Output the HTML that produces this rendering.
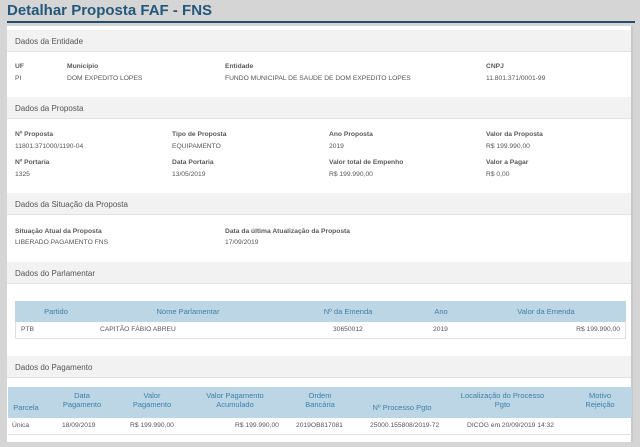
<!DOCTYPE html>
<html><head><meta charset="utf-8"><style>
*{margin:0;padding:0;box-sizing:border-box}
body{width:640px;height:447px;background:#d5d5d5;font-family:"Liberation Sans",sans-serif;position:relative;overflow:hidden;color:#555}
.a{position:absolute;white-space:nowrap}
.t{left:7px;top:2px;font-size:15px;font-weight:bold;color:#24587a}
.ul{left:7px;top:21px;width:628px;height:2px;background:#24506c}
.panel{left:7px;top:26px;width:626px;height:416px;background:#fff;border-right:2px solid #c8c8c8}
.band{left:7px;width:624px;height:22px;background:#f2f2f2;border-bottom:1px solid #e2e2e2;font-size:8px;color:#555;padding:7px 0 0 8px}
.l{font-size:6.7px;font-weight:bold;color:#5a5a5a}
.v{font-size:6.7px;color:#555}
.th{background:#bcd6e5;color:#3d7fa8;font-size:7.5px;text-align:center;line-height:9px}
.c{font-size:6.7px;color:#555}
</style></head><body>
<div class="a t">Detalhar Proposta FAF - FNS</div>
<div class="a ul"></div>
<div class="a panel"></div>

<div class="a band" style="top:30px">Dados da Entidade</div>
<div class="a l" style="left:15px;top:63px">UF</div><div class="a v" style="left:15px;top:75px">PI</div>
<div class="a l" style="left:67px;top:63px">Município</div><div class="a v" style="left:67px;top:75px">DOM EXPEDITO LOPES</div>
<div class="a l" style="left:225px;top:63px">Entidade</div><div class="a v" style="left:225px;top:75px">FUNDO MUNICIPAL DE SAUDE DE DOM EXPEDITO LOPES</div>
<div class="a l" style="left:486px;top:63px">CNPJ</div><div class="a v" style="left:486px;top:75px">11.801.371/0001-99</div>

<div class="a band" style="top:97px">Dados da Proposta</div>
<div class="a l" style="left:15px;top:131px">Nº Proposta</div><div class="a v" style="left:15px;top:143px">11801.371000/1190-04</div>
<div class="a l" style="left:172px;top:131px">Tipo de Proposta</div><div class="a v" style="left:172px;top:143px">EQUIPAMENTO</div>
<div class="a l" style="left:329px;top:131px">Ano Proposta</div><div class="a v" style="left:329px;top:143px">2019</div>
<div class="a l" style="left:486px;top:131px">Valor da Proposta</div><div class="a v" style="left:486px;top:143px">R$ 199.990,00</div>
<div class="a l" style="left:15px;top:159px">Nº Portaria</div><div class="a v" style="left:15px;top:171px">1325</div>
<div class="a l" style="left:172px;top:159px">Data Portaria</div><div class="a v" style="left:172px;top:171px">13/05/2019</div>
<div class="a l" style="left:329px;top:159px">Valor total de Empenho</div><div class="a v" style="left:329px;top:171px">R$ 199.990,00</div>
<div class="a l" style="left:486px;top:159px">Valor a Pagar</div><div class="a v" style="left:486px;top:171px">R$ 0,00</div>

<div class="a band" style="top:193px">Dados da Situação da Proposta</div>
<div class="a l" style="left:15px;top:228px">Situação Atual da Proposta</div><div class="a v" style="left:15px;top:239px">LIBERADO PAGAMENTO FNS</div>
<div class="a l" style="left:225px;top:228px">Data da última Atualização da Proposta</div><div class="a v" style="left:225px;top:239px">17/09/2019</div>

<div class="a band" style="top:262px">Dados do Parlamentar</div>
<div class="a" style="left:15px;top:301px;width:611px;height:38px;border:1px solid #e0e0e0;border-top:none"></div>
<div class="a th" style="left:15px;top:301px;width:611px;height:21px"></div>
<div class="a th" style="left:16px;top:307px;width:80px;background:none">Partido</div>
<div class="a th" style="left:120px;top:307px;width:136px;background:none">Nome Parlamentar</div>
<div class="a th" style="left:300px;top:307px;width:96px;background:none">Nº da Emenda</div>
<div class="a th" style="left:410px;top:307px;width:62px;background:none">Ano</div>
<div class="a th" style="left:480px;top:307px;width:132px;background:none">Valor da Emenda</div>
<div class="a c" style="left:21px;top:326px">PTB</div>
<div class="a c" style="left:100px;top:326px">CAPITÃO FÁBIO ABREU</div>
<div class="a c" style="left:333px;top:326px">30650012</div>
<div class="a c" style="left:433px;top:326px">2019</div>
<div class="a c" style="right:20px;top:326px">R$ 199.990,00</div>

<div class="a band" style="top:356px">Dados do Pagamento</div>
<div class="a" style="left:8px;top:387px;width:624px;height:48px;border-bottom:1px solid #e0e0e0"></div>
<div class="a th" style="left:8px;top:387px;width:624px;height:31px"></div>
<div class="a th" style="left:8px;top:403px;width:36px;background:none">Parcela</div>
<div class="a th" style="left:52px;top:391px;width:60px;background:none">Data<br>Pagamento</div>
<div class="a th" style="left:120px;top:391px;width:64px;background:none">Valor<br>Pagamento</div>
<div class="a th" style="left:190px;top:391px;width:90px;background:none">Valor Pagamento<br>Acumulado</div>
<div class="a th" style="left:290px;top:391px;width:60px;background:none">Ordem<br>Bancária</div>
<div class="a th" style="left:360px;top:403px;width:84px;background:none">Nº Processo Pgto</div>
<div class="a th" style="left:455px;top:391px;width:95px;background:none">Localização do Processo<br>Pgto</div>
<div class="a th" style="left:570px;top:391px;width:60px;background:none">Motivo<br>Rejeição</div>
<div class="a c" style="left:12px;top:422px">Única</div>
<div class="a c" style="left:62px;top:422px">18/09/2019</div>
<div class="a c" style="left:130px;top:422px">R$ 199.990,00</div>
<div class="a c" style="left:235px;top:422px">R$ 199.990,00</div>
<div class="a c" style="left:296px;top:422px">2019OB817081</div>
<div class="a c" style="left:370px;top:422px">25000.155808/2019-72</div>
<div class="a c" style="left:467px;top:422px">DICOG em 20/09/2019 14:32</div>
</body></html>
